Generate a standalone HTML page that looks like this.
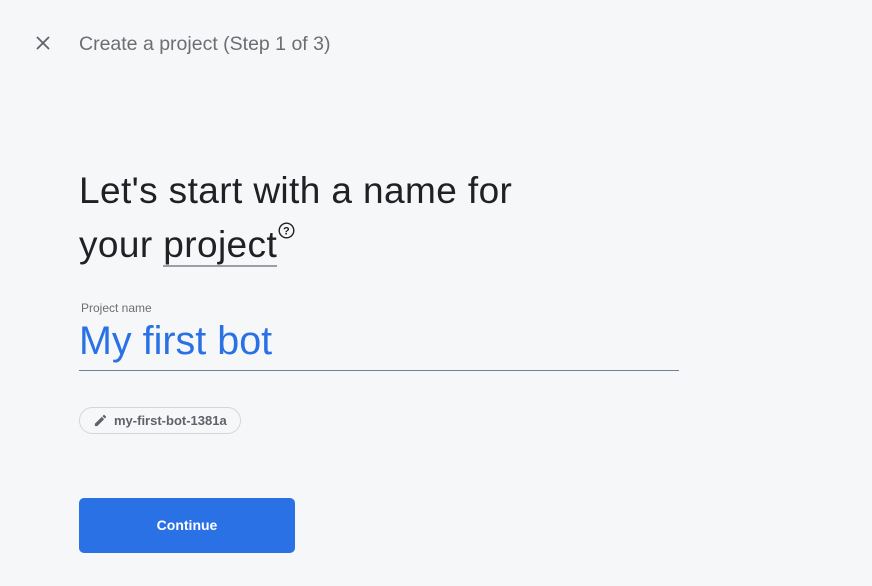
<!DOCTYPE html>
<html><head><style>
body{margin:0;width:872px;height:586px;background:#f6f7f9;font-family:"Liberation Sans",Arial,sans-serif;position:relative;overflow:hidden}
.a{position:absolute;white-space:nowrap}
</style></head><body>
<svg class="a" style="left:35px;top:35px" width="16" height="16" viewBox="0 0 16 16"><path d="M2 2L14 14M14 2L2 14" stroke="#5f6368" stroke-width="1.8"/></svg>
<div class="a" style="left:79px;top:33px;font-size:19.5px;color:#6b6e72">Create a project (Step 1 of 3)</div>
<div class="a" style="left:79px;top:164px;font-size:37px;color:#202124;line-height:54px;letter-spacing:0.4px">Let's start with a name for</div>
<div class="a" style="left:79px;top:218px;font-size:37px;color:#202124;line-height:54px;letter-spacing:0.4px">your <span style="border-bottom:2px solid #9aa0a6">project</span><svg width="17" height="17" viewBox="0 0 17 17" style="vertical-align:18px;margin-left:1px"><circle cx="8.5" cy="8.5" r="7.3" fill="none" stroke="#202124" stroke-width="1.4"/><text x="8.5" y="12.5" font-size="11" text-anchor="middle" font-family="Liberation Sans" font-weight="bold" fill="#202124">?</text></svg></div>
<div class="a" style="left:81px;top:301px;font-size:12px;color:#6b6e72">Project name</div>
<div class="a" style="left:79px;top:319px;font-size:39.5px;color:#2a71e6">My first bot</div>
<div class="a" style="left:79px;top:370px;width:600px;height:1px;background:#6f7f95"></div>
<div class="a" style="left:79px;top:407px;width:162px;height:27px;border:1px solid #d3d5d9;border-radius:14px;box-sizing:border-box"></div>
<svg class="a" style="left:93px;top:413px" width="15" height="15" viewBox="0 0 24 24"><path d="M3 17.25V21h3.75L17.81 9.94l-3.75-3.75L3 17.25zM20.71 7.04a1 1 0 000-1.41l-2.34-2.34a1 1 0 00-1.41 0l-1.830 1.83 3.75 3.75 1.83-1.83z" fill="#5f6368"/></svg>
<div class="a" style="left:114px;top:413px;font-size:13px;color:#5f6368;font-weight:bold">my-first-bot-1381a</div>
<div class="a" style="left:79px;top:498px;width:216px;height:55px;background:#2a71e6;border-radius:5px;color:#fff;font-size:14px;font-weight:bold;text-align:center;line-height:55px">Continue</div>
</body></html>
